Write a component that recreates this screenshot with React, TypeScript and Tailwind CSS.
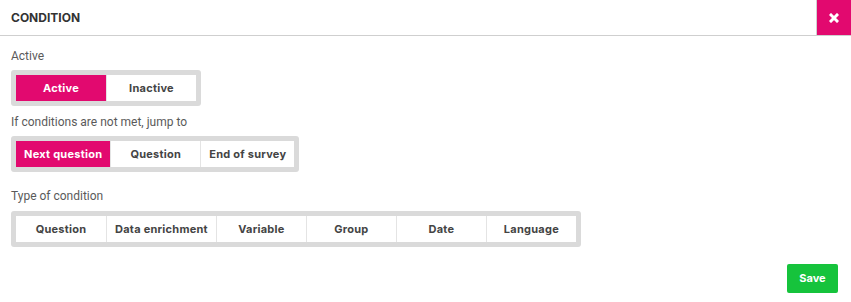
import React from "react";

function Group({ items, active, className = "" }: { items: string[]; active?: number; className?: string }) {
  return (
    <div className={"inline-flex rounded-[3px] bg-[#dadada] p-[5px] " + className}>
      {items.map((t, i) => (
        <div
          key={t}
          className={
            "flex h-[26px] min-w-[90px] items-center justify-center px-[8px] text-[11px] font-bold tracking-[0.25px] " +
            (i === active
              ? "bg-[#e2096f] text-white"
              : "bg-white text-[#444] " + (i > 0 ? "border-l border-[#e4e4e4]" : ""))
          }
          style={{ fontFamily: "Inter, 'Noto Sans', sans-serif" }}
        >
          {t}
        </div>
      ))}
    </div>
  );
}

export default function App() {
  return (
    <div className="relative h-[302px] w-[851px] bg-white" style={{ fontFamily: "Roboto, 'Liberation Sans', sans-serif" }}>
      <div className="flex h-[36px] items-stretch border-b border-[#cfcfcf]">
        <div
          className="flex flex-1 items-center pl-[11px] text-[12px] font-bold text-[#333]"
          style={{ fontFamily: "Inter, 'Noto Sans', sans-serif" }}
        >
          CONDITION
        </div>
        <div className="flex w-[35px] items-center justify-center border-l border-[#d0d0d0] bg-[#e2096f]">
          <svg width="10" height="10" viewBox="0 0 10 10">
            <path d="M2 2 L8 8 M8 2 L2 8" stroke="white" strokeWidth="3" strokeLinecap="square" />
          </svg>
        </div>
      </div>
      <div className="flex flex-col px-[11px]">
        <div className="mt-[12px] text-[12px] leading-[16px] text-[#5a5a5a]">Active</div>
        <Group className="mt-[6px] self-start" items={["Active", "Inactive"]} active={0} />
        <div className="mt-[8px] text-[12px] leading-[16px] text-[#5a5a5a]">If conditions are not met, jump to</div>
        <Group className="mt-[6px] self-start" items={["Next question", "Question", "End of survey"]} active={0} />
        <div className="mt-[16px] text-[12px] leading-[16px] text-[#5a5a5a]">Type of condition</div>
        <Group
          className="mt-[7px] self-start"
          items={["Question", "Data enrichment", "Variable", "Group", "Date", "Language"]}
        />
      </div>
      <div className="absolute right-[13px] top-[264px]">
        <div
          className="flex h-[29px] w-[51px] items-center justify-center rounded-[2px] bg-[#16c33c] text-[11px] font-bold text-white"
          style={{ fontFamily: "Inter, 'Noto Sans', sans-serif" }}
        >
          Save
        </div>
      </div>
    </div>
  );
}
